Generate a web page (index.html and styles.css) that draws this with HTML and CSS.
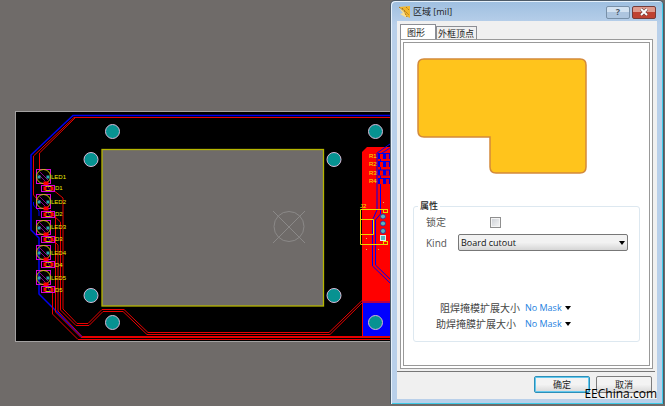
FILE: index.html
```html
<!DOCTYPE html>
<html lang="zh-CN">
<head>
    <meta charset="UTF-8">
    <meta name="viewport" content="width=device-width, initial-scale=1.0">
    <title>区域 [mil]</title>
    <link rel="stylesheet" href="styles.css">
</head>
<body>

<main class="workspace">
    <svg class="board" viewBox="0 0 390 406" preserveAspectRatio="xMinYMin slice" role="img" aria-label="PCB">
        <defs>
            <g id="pad">
                <circle r="7" fill="#079291" stroke="#d9b9d6" stroke-width="1"/>
            </g>
            <g id="led" fill="none">
                <rect x="-7" y="-7" width="14" height="14" stroke="#d800d8"/>
                <circle r="7" stroke="#c9c900"/>
                <path d="M-4-5L5 4M-5-2L2 5" stroke="#8b008b"/>
                <rect x="-6" y="-1" width="3" height="3" fill="#2aa8b0"/>
                <rect x="3" y="-1" width="3" height="3" fill="#2aa8b0"/>
                <rect x="0" y="5" width="5" height="4" fill="#f00"/>
            </g>
            <g id="diode" fill="none">
                <rect x="-7" y="-3" width="13" height="6" stroke="#d800d8"/>
                <rect x="-5" y="-2" width="3" height="4" fill="#f00"/>
                <rect x="2" y="-2" width="3" height="4" fill="#f00"/>
                <path d="M-3-2H3M-3 2H3" stroke="#c9c900"/>
                <path d="M-1-2L2 2" stroke="#8b008b"/>
            </g>
            <g id="resistor">
                <rect x="-5" y="-3" width="12" height="6" fill="#0000e8"/>
                <rect x="-3" y="-2" width="3" height="5" fill="#f00"/>
                <rect x="3" y="-2" width="3" height="5" fill="#d00030"/>
            </g>
        </defs>

        <rect x="15.5" y="111.5" width="380" height="230" fill="#000" stroke="#a3a1a1"/>

        <!-- copper area on the right -->
        <path d="M362 337V152L367 147H390V337Z" fill="#f00"/>
        <path d="M363 303H390V337H363Z" fill="#00f"/>
        <path d="M362 302H390" stroke="#700090"/>

        <!-- blue traces -->
        <g fill="none" stroke="#0000f0">
            <path d="M390 115.5H73L31 155V230L39 238V294L82 337" stroke-width="1.5"/>
            <path d="M33.5 202V205L39 211V216"/>
            <path d="M390 144L377 153V210L372.5 220V266L390 283"/>
            <path d="M390 148L380.500 154V214L375.500 220V265L390 279"/>
        </g>

        <!-- red traces -->
        <g fill="none" stroke="#e80000">
            <path d="M390 117.500H74L33.500 156V195L38 200"/>
            <path d="M75 118L39.500 153V171"/>
            <path d="M52 189L63 198V309L77 323.500H88L102 309.500H124L148 332.500H329L362 300.500"/>
            <path d="M52 214L60.500 222V310L76 325.500H89L103 311.500H123L147 334.500H330L362 303"/>
            <path d="M52 239L58 245V311L82 336.500H390"/>
            <path d="M50 210L55.500 216V312L81 337.500H390"/>
            <path d="M52.500 289V314L78 339.500H390"/>
        </g>

        <!-- board cutout -->
        <rect x="102" y="149.500" width="221.500" height="156.500" fill="#6f6b69" stroke="#b6b600" stroke-width="1.3"/>
        <g fill="none" stroke="#8b8988">
            <circle cx="289" cy="226.500" r="15"/>
            <path d="M273 211L305 243M305 211L273 243"/>
        </g>

        <use href="#pad" x="112.500" y="131.500"/>
        <use href="#pad" x="91" y="159.500"/>
        <use href="#pad" x="375.500" y="131.500"/>
        <use href="#pad" x="334" y="159.500"/>
        <use href="#pad" x="91" y="295.500"/>
        <use href="#pad" x="334" y="295.500"/>
        <use href="#pad" x="112.500" y="322.500"/>
        <use href="#pad" x="375.500" y="322.500"/>

        <use href="#led" x="43.500" y="176.500"/>
        <use href="#led" x="43.500" y="201.500"/>
        <use href="#led" x="43.500" y="227.500"/>
        <use href="#led" x="43.500" y="252.500"/>
        <use href="#led" x="43.500" y="277.500"/>
        <use href="#diode" x="48.500" y="188.500"/>
        <use href="#diode" x="48.500" y="214.500"/>
        <use href="#diode" x="48.500" y="239.500"/>
        <use href="#diode" x="48.500" y="264.500"/>
        <use href="#diode" x="48.500" y="289.500"/>

        <g class="silk">
            <text x="51" y="179">LED1</text>
            <text x="55" y="190">D1</text>
            <text x="51" y="204">LED2</text>
            <text x="55" y="216">D2</text>
            <text x="51" y="229">LED3</text>
            <text x="55" y="241">D3</text>
            <text x="51" y="255">LED4</text>
            <text x="55" y="267">D4</text>
            <text x="51" y="280">LED5</text>
            <text x="55" y="292">D5</text>
        </g>

        <use href="#resistor" x="383" y="156"/>
        <use href="#resistor" x="383" y="164"/>
        <use href="#resistor" x="383" y="172.500"/>
        <use href="#resistor" x="383" y="181"/>
        <g class="silk">
            <text x="369" y="158">R1</text>
            <text x="369" y="166">R2</text>
            <text x="369" y="175">R3</text>
            <text x="369" y="183">R4</text>
            <text x="360" y="208">J2</text>
        </g>

        <!-- connector J2 -->
        <g fill="none" stroke="#e8d800">
            <path d="M388 209.500H360.500V244.500H388"/>
            <path d="M360.500 219.500H373.500V234.500H360.500"/>
            <rect x="383.500" y="209.500" width="4" height="3"/>
            <rect x="383.500" y="241.500" width="4" height="3"/>
        </g>
        <g fill="#55b7bd" stroke="#403090">
            <circle cx="383" cy="216.500" r="2.500"/>
            <circle cx="383" cy="223.500" r="2.500"/>
            <circle cx="383" cy="231" r="2.500"/>
            <rect x="380.500" y="235.500" width="5" height="5" stroke="#e5eeee"/>
        </g>
        <path d="M366 238h1v1h-1zM366 249h1v1h-1zM378 249h1v1h-1zM383 202h1v1h-1z" fill="#d8c060"/>
    </svg>
</main>

<section class="dialog" role="dialog" aria-labelledby="dialog-title">
    <header class="titlebar">
        <svg class="app-icon" viewBox="0 0 12 12" aria-hidden="true">
            <path d="M0 1L11 0V12L7 10L5 5Z" fill="#f3b72c"/>
            <path d="M0 2L5 5L8 12L1 8L4 7Z" fill="#ffe08a"/>
            <path d="M0 1L5 5L8 11M3 2L10 9M7 1L10 4" stroke="#a8761c" stroke-width="1" stroke-dasharray="2 1" fill="none"/>
        </svg>
        <h1 id="dialog-title">区域 [mil]</h1>
        <button type="button" class="window-button">?</button>
        <button type="button" class="window-button close" aria-label="关闭">
            <svg viewBox="0 0 10 8" aria-hidden="true">
                <path d="M2 1L8 7M8 1L2 7" stroke="#5c3535" stroke-width="3"/>
                <path d="M2 1L8 7M8 1L2 7" stroke="#fff" stroke-width="2"/>
            </svg>
        </button>
    </header>

    <form class="client" id="region-form">
        <div class="tabs" role="tablist">
            <button type="button" class="tab active" role="tab" aria-selected="true">图形</button>
            <button type="button" class="tab" role="tab" aria-selected="false">外框顶点</button>
        </div>

        <div class="tab-panel">
            <div class="page">
                <svg class="preview" viewBox="0 0 170 116" aria-hidden="true">
                    <path d="M7 1H163Q169 1 169 7V109Q169 115 163 115H79Q73 115 73 109V79H7Q1 79 1 73V7Q1 1 7 1Z" fill="#ffc41c" stroke="#d3893a" stroke-width="1.500"/>
                </svg>

                <fieldset class="properties">
                    <legend>属性</legend>
                    <div class="row">
                        <label for="locked">锁定</label>
                        <input type="checkbox" id="locked" name="locked">
                    </div>
                    <div class="row">
                        <label for="kind">Kind</label>
                        <div class="select-box">
                            <select id="kind" name="kind">
                                <option>Board cutout</option>
                            </select>
                        </div>
                    </div>
                    <div class="masks">
                        <div class="mask-row">
                            <label for="solder">阻焊掩模扩展大小</label>
                            <div class="select-box link">
                                <select id="solder" name="solder">
                                    <option>No Mask</option>
                                </select>
                            </div>
                        </div>
                        <div class="mask-row paste">
                            <label for="paste">助焊掩膜扩展大小</label>
                            <div class="select-box link">
                                <select id="paste" name="paste">
                                    <option>No Mask</option>
                                </select>
                            </div>
                        </div>
                    </div>
                </fieldset>
            </div>
        </div>

        <div class="actions">
            <button type="submit" class="button primary">确定</button>
            <button type="button" class="button">取消</button>
        </div>
    </form>
</section>

<div class="watermark">EEChina.com</div>

</body>
</html>
```
FILE: styles.css
```css
* {
    box-sizing: border-box;
}

body {
    margin: 0;
    min-height: 100vh;
    display: flex;
    align-items: flex-start;
    position: relative;
    background-color: #6f6b69;
    font-family: "Open Sans", "Noto Sans CJK SC", sans-serif;
    font-size: 9px;
    line-height: 12px;
    color: #222;
}

button,
select {
    font: inherit;
    color: inherit;
    margin: 0;
    padding: 0;
}

.workspace {
    flex: 1;
    min-width: 0;
    align-self: stretch;
}

.board {
    display: block;
    width: 100%;
}

.silk {
    fill: #f0f000;
    font-family: "Liberation Sans", sans-serif;
    font-size: 6px;
}

/* dialog window */
.dialog {
    flex: 0 0 274px;
    margin-right: 1px;
    padding: 0 6px 5px;
    background: linear-gradient(#9ebfe0, #b9d0ea 24px);
    border: 1px solid #4d5b68;
    border-width: 1px 1px 0;
    border-radius: 5px 5px 0 0;
    box-shadow: inset 1px 1px #e6f1fb, inset -1px -1px #3fcbe8;
}

.titlebar {
    display: flex;
    align-items: center;
    height: 20px;
    padding: 2px 1px 0 2px;
}

.app-icon {
    width: 12px;
    height: 12px;
    margin-right: 2px;
}

.titlebar h1 {
    flex: 1;
    margin: 0;
    font-size: 9px;
    font-weight: normal;
}

.window-button {
    display: flex;
    align-items: center;
    justify-content: center;
    width: 24px;
    height: 13px;
    margin-left: 2px;
    border: 1px solid #7890a8;
    border-radius: 2px;
    background: linear-gradient(#d3e2f1 50%, #adc5df 50%);
    font-size: 9px;
    font-weight: bold;
    color: #4a5866;
}

.window-button.close {
    border-color: #763b38;
    background: linear-gradient(#df9a8d 50%, #bf4232 50%);
}

.close svg {
    width: 10px;
    height: 8px;
}

.client {
    padding: 3px 2px 6px 3px;
    background-color: #f0f0f0;
}

.tabs {
    display: flex;
    align-items: flex-end;
}

.tab {
    height: 13px;
    padding: 0 2px 0 1px;
    border: 1px solid #8c8e94;
    border-bottom: none;
    background-color: #f0f0f0;
    line-height: 11px;
}

.tab.active {
    height: 15px;
    padding: 0 10px 0 6px;
    background-color: #fff;
}

.tab-panel {
    margin-right: 2px;
    padding: 2px;
    border: 1px solid #999;
    background-color: #fff;
}

.page {
    padding: 15px 9px 23px;
    border: 1px solid #999;
}

.preview {
    display: block;
    width: 170px;
    height: 116px;
    margin-left: 4px;
}

.properties {
    min-width: 0;
    height: 142px;
    margin: 26px 0 0;
    padding: 4px 11px 0 12px;
    border: 1px solid #dde8f0;
    border-radius: 3px;
}

.properties legend {
    margin-left: -8px;
    padding: 0 2px;
    font-weight: 500;
    color: #222;
}

.row {
    display: flex;
    align-items: center;
    margin-bottom: 6px;
    font-size: 10px;
}

.row label {
    width: 32px;
    color: #555;
}

.row input {
    width: 11px;
    height: 11px;
    margin: 0 0 0 32px;
    appearance: none;
    border: 1px solid #8f8f8f;
    background: linear-gradient(135deg, #cbcfd5, #f6f6f6);
    box-shadow: inset 0 0 0 1px #f4f4f4;
}

.select-box {
    position: relative;
    flex: 1;
}

.select-box::after {
    content: "";
    position: absolute;
    top: 50%;
    right: 3px;
    margin-top: -2px;
    border: 3px solid transparent;
    border-top: 4px solid #000;
    border-bottom: none;
    pointer-events: none;
}

.select-box select {
    display: block;
    width: 100%;
    height: 17px;
    padding-left: 2px;
    appearance: none;
    border: 1px solid #777;
    border-radius: 2px;
    background: linear-gradient(#f2f2f2 50%, #d6d6d6);
    font-size: 9px;
    color: #111;
}

.masks {
    margin-top: 49px;
}

.mask-row {
    display: flex;
    align-items: center;
    height: 16px;
    padding-left: 14px;
    font-size: 10px;
    color: #444;
}

.mask-row.paste {
    padding-left: 10px;
}

.mask-row label {
    width: 85px;
    white-space: nowrap;
}

.mask-row.paste label {
    width: 89px;
}

.select-box.link {
    flex: 0 0 49px;
}

.select-box.link select {
    height: 14px;
    padding: 0;
    border: none;
    background: none;
    color: #1b7fe0;
}

.actions {
    display: flex;
    justify-content: flex-end;
    gap: 6px;
    margin: 2px 0 0 -3px;
    padding: 4px 3px 0 0;
    border-top: 1px solid #777;
}

.button {
    width: 56px;
    height: 17px;
    border: 1px solid #7c7c7c;
    border-radius: 2px;
    background: linear-gradient(#f3f3f3 50%, #d8d8d8);
    line-height: 14px;
}

.button.primary {
    border-color: #2c8fb8;
    box-shadow: inset 0 0 0 1px #62c8ee;
}

/* site mark over the bottom right corner */
.watermark {
    position: absolute;
    right: 8px;
    bottom: 4px;
    font-size: 12px;
    line-height: 16px;
    color: #000;
}
```
